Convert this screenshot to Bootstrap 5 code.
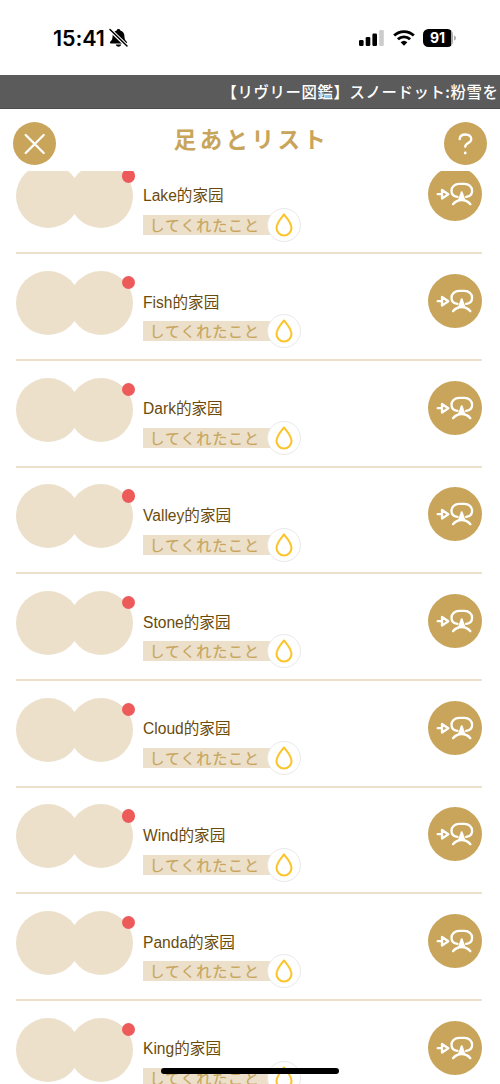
<!DOCTYPE html>
<html lang="ja">
<head>
<meta charset="utf-8">
<meta name="viewport" content="width=device-width, initial-scale=1">
<title>足あとリスト</title>
<link href="https://cdn.jsdelivr.net/npm/bootstrap@5.3.0/dist/css/bootstrap.min.css" rel="stylesheet">
<style>
  :root { --gold: #c8a55b; --sand: #ece0cb; }
  body { font-family: "Liberation Sans", "Noto Sans CJK JP", sans-serif; background: #fff; }
  .screen { width: 500px; height: 1084px; }
  .status { height: 75px; padding: 0 43px 0 53px; color: #000; font-family: Inter, sans-serif; }
  .clock { font-size: 21.5px; font-weight: 600; line-height: 26px; letter-spacing: -.1px; }
  .battery { width: 30px; height: 18px; border-radius: 5.5px; background: linear-gradient(90deg, #000 28px, #aaa 28px); color: #fff; font-size: 14px; font-weight: 700; line-height: 18px; padding-right: 1px; }
  .ticker { height: 34px; background: #5b5b5b; border-bottom: 1px solid #4c4c4c; color: #fff; font-family: "Noto Sans CJK JP", sans-serif; font-size: 15.4px; font-weight: 500; letter-spacing: .6px; line-height: 32px; padding-left: 221.500px; }
  .topbar { height: 62px; padding: 12.500px 13px 0; }
  .title { font-family: "Noto Sans CJK JP", sans-serif; font-size: 22.500px; font-weight: 700; letter-spacing: 3.400px; line-height: 32px; color: var(--gold); padding-left: 3px; }
  .round { width: 43px; height: 43px; background: var(--gold); }
  .feed-inner { margin-top: -23.4px; }
  .visit { height: 106.67px; margin: 0 18px 0 16px; border-bottom: 2px solid var(--sand); }
  .pair { width: 117px; margin-top: 16.700px; }
  .face { width: 64px; height: 64px; background: var(--sand); }
  .face + .face { margin-left: -11px; }
  .dot { width: 13.5px; height: 13.5px; background: #ed5a5a; right: -2.2px; top: 5px; }
  .info { margin: 36.300px 0 0 10px; }
  .owner { font-family: "Liberation Sans", "Noto Sans CJK SC", sans-serif; font-size: 15.6px; line-height: 24px; color: #6a4b0c; }
  .deed { width: 141px; height: 20px; margin-top: 6.700px; padding-left: 6.500px; background: var(--sand); color: var(--gold); font-family: "Noto Sans CJK JP", sans-serif; font-size: 15px; font-weight: 400; -webkit-text-stroke: .2px var(--gold); letter-spacing: .9px; line-height: 20px; }
  .drop { width: 34px; height: 34px; right: -16.500px; top: -7px; background: #fff; border: 1px solid #e9e9e9; }
  .go { width: 54px; height: 54px; background: var(--gold); margin-top: 19.700px; }
  .homebar { width: 178px; height: 6px; background: #000; left: 161px; top: 1067.500px; }
</style>
</head>
<body>
<div class="screen d-flex flex-column overflow-hidden position-relative">
  <header class="status d-flex align-items-center flex-shrink-0">
    <span class="clock">15:41</span>
    <svg class="ms-1" width="19" height="20" viewBox="0 0 19 20">
      <path d="M9.5 1c-1 0-1.700.6-1.800 1.500C5.200 3.300 3.600 5.300 3.600 7.800c0 3.300-.8 4.500-2.100 5.600-.9.700-.7 2 .5 2h15c1.200 0 1.400-1.300.5-2C16.200 12.300 15.400 11.100 15.400 7.800c0-2.500-1.600-4.500-4.100-5.300C11.200 1.600 10.500 1 9.500 1ZM6.800 16.500h5.400c-.3 1.400-1.300 2.200-2.700 2.200s-2.400-.8-2.700-2.200Z"/>
      <path d="M.8 1.500 17.800 18" stroke="#fff" stroke-width="3.800"/>
      <path d="M1 1.500 18 18" stroke="#000" stroke-width="1.500" stroke-linecap="round"/>
    </svg>
    <svg class="ms-auto" width="26" height="18" viewBox="0 0 26 18">
      <rect x="0" y="11" width="4.600" height="6" rx="1.300"/><rect x="6.700" y="8" width="4.600" height="9" rx="1.300"/>
      <rect x="13.400" y="4.500" width="4.600" height="12.500" rx="1.300"/><rect x="20.200" y="1" width="4.600" height="16" rx="1.300" fill="#ccc"/>
    </svg>
    <svg class="ms-2" width="22" height="18" viewBox="0 0 22 18" fill="none" stroke="#000" stroke-width="2.900">
      <path d="M1.200 6.500a14.200 14.200 0 0 1 19.600 0"/><path d="M4.900 10.300a9 9 0 0 1 12.200 0"/>
      <path d="M11 16.700 7.600 13.300a5 5 0 0 1 6.800 0Z" fill="#000" stroke="none"/>
    </svg>
    <span class="battery d-block text-center ms-2">91</span>
    <svg width="4" height="6" viewBox="0 0 4 6"><path d="M1 .5Q3 1 3 3T1 5.500Z" fill="#aaa"/></svg>
  </header>
  <div class="ticker text-nowrap overflow-hidden flex-shrink-0">【リヴリー図鑑】スノードット:粉雪を</div>
  <nav class="topbar d-flex justify-content-between flex-shrink-0">
    <div class="round rounded-circle">
      <svg class="d-block" width="43" height="43" viewBox="0 0 43 43" stroke="#fff" stroke-width="2.300" stroke-linecap="round"><path d="m12.700 13 18 18m0-18-18 18"/></svg>
    </div>
    <h1 class="title m-0">足あとリスト</h1>
    <div class="round rounded-circle">
      <svg class="d-block" width="43" height="43" viewBox="0 0 43 43" fill="none" stroke="#fff" stroke-width="2.300" stroke-linecap="round" stroke-linejoin="round"><path d="M15.700 17.200c0-3 2.400-4.700 5.800-4.700s5.800 1.800 5.800 4.700c0 4-6.100 3.500-6.100 7.600"/><circle cx="21.200" cy="31" r="1.400" fill="#fff" stroke="none"/></svg>
    </div>
  </nav>
  <main class="flex-grow-1 overflow-hidden"><div class="feed-inner" id="visits"></div></main>
  <div class="homebar position-absolute rounded-pill"></div>
</div>
<template id="visit">
  <article class="visit d-flex align-items-start">
    <div class="pair d-flex position-relative flex-shrink-0">
      <div class="face rounded-circle"></div><div class="face rounded-circle"></div>
      <span class="dot position-absolute rounded-circle"></span>
    </div>
    <div class="info">
      <div class="owner text-nowrap"></div>
      <div class="deed position-relative text-nowrap">してくれたこと
        <span class="drop position-absolute rounded-circle d-flex align-items-center justify-content-center">
          <svg width="20" height="26" viewBox="0 0 20 26"><path d="M10 2.500C7.500 5.600 2.500 11 2.500 16a7.500 7.500 0 0 0 15 0c0-5-5-10.400-7.500-13.500Z" fill="none" stroke="#fcc42c" stroke-width="2.100" stroke-linejoin="round"/></svg>
        </span>
      </div>
    </div>
    <div class="go rounded-circle ms-auto flex-shrink-0">
      <svg class="d-block" width="54" height="54" viewBox="0 0 54 54" fill="none" stroke="#fff" stroke-width="2.300" stroke-linecap="round" stroke-linejoin="round">
        <path d="M9.700 27.200h4M14 23v8.600l6.300-4.300Z"/>
        <path d="M29.500 29.900c-3.600-.4-6-2.800-6-6.100 0-4 3.200-6.900 7.700-6.900h5.200c4.500 0 7.700 2.900 7.700 6.900 0 3.300-2.400 5.700-6 6.100"/>
        <path d="M25 37.200c2.300-2.800 5.200-4.200 8.700-4.200s6.400 1.400 8.700 4.200"/>
        <path d="M33.700 25.200 31.200 32.500h5Z" fill="#fff" stroke-width="2"/>
      </svg>
    </div>
  </article>
</template>
<script src="https://cdn.jsdelivr.net/npm/bootstrap@5.3.0/dist/js/bootstrap.bundle.min.js"></script>
<script>
  const template = document.getElementById('visit');
  const list = document.getElementById('visits');
  for (const name of ['Lake', 'Fish', 'Dark', 'Valley', 'Stone', 'Cloud', 'Wind', 'Panda', 'King']) {
    const row = template.content.cloneNode(true);
    row.querySelector('.owner').textContent = name + '的家园';
    list.append(row);
  }
</script>
</body>
</html>
